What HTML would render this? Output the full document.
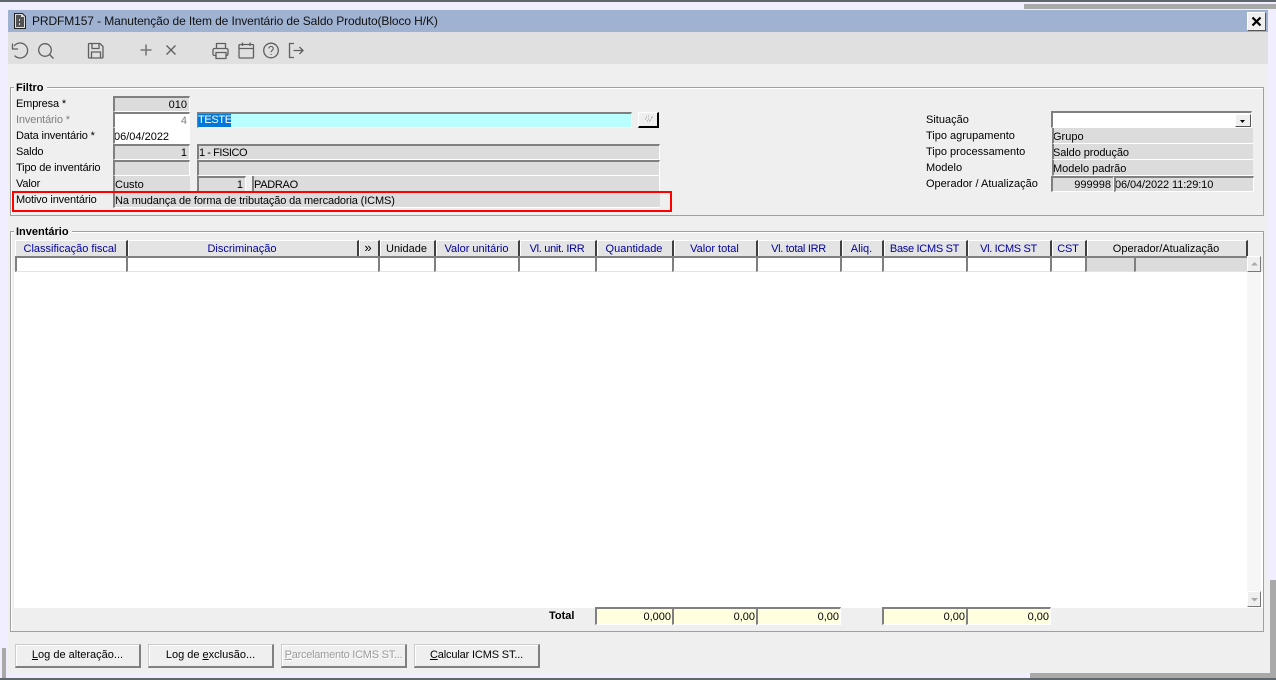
<!DOCTYPE html>
<html><head><meta charset="utf-8"><style>
html,body{margin:0;padding:0}
body{width:1276px;height:680px;position:relative;overflow:hidden;background:#f1efff;font:11px "Liberation Sans",sans-serif;color:#000}
div{position:absolute;box-sizing:border-box;white-space:nowrap}
.l{height:14px;line-height:14px;left:16px}
.s{letter-spacing:-.15px}
.f{border-top:2px solid #808080;border-left:2px solid #808080;border-right:1px solid #fff;border-bottom:1px solid #fff;background:#dcdcdc;line-height:14px;padding:0 2px 0 0;height:16px;overflow:hidden}
.w{background:#fff}
.y{background:#ffffe0;text-align:right;padding-right:1px}
.r{text-align:right}
.n{border-top:0;border-right:0;border-bottom:1px solid #fff;line-height:18px}
.h{top:240px;height:16px;background:#e4e4e4;border-right:2px solid #404040;border-left:1px solid #fff;border-top:1px solid #fff;text-align:center;line-height:17px;padding-right:2px;color:#00009c}
.c{top:256px;height:16px;background:#fff;border-top:2px solid #808080;border-left:2px solid #808080;border-bottom:1px solid #e4e4e4}
.g{border:1px solid #a0a0a0;box-shadow:inset 1px 1px 0 #fff}
.lg{background:#efefef;font-weight:bold;height:14px;line-height:14px;padding:0 3px 0 2px;left:14px}
.b{top:644px;height:24px;width:126px;background:#efefef;border:1px solid #ccc;border-right:2px solid #808080;border-bottom:2px solid #808080;box-shadow:inset 1px 1px 0 #fff;text-align:center;line-height:21px}
u{text-decoration:underline}
svg{position:absolute;overflow:visible}
</style></head><body>
<div style="left:0;top:0;width:1276px;height:2px;background:#5f666c"></div>
<div style="left:1024px;top:4px;width:252px;height:5px;background:#a9a9a9"></div>
<div style="left:1270px;top:580px;width:6px;height:100px;background:#a9a9a9"></div>
<div style="left:1030px;top:673px;width:246px;height:5px;background:#a9a9a9"></div>
<div style="left:0;top:678px;width:1276px;height:2px;background:#5f666c"></div>
<div style="left:2px;top:648px;width:4px;height:30px;background:#a9a9a9"></div>

<div style="left:8px;top:9px;width:1260px;height:664px;background:#efefef"></div>
<div style="left:1268px;top:580px;width:2px;height:93px;background:#efefef"></div>
<div style="left:8px;top:10px;width:1260px;height:22px;background:#a0b2d2"></div>
<div style="left:8px;top:32px;width:1260px;height:32px;background:#e0e0e0"></div>
<svg style="left:13px;top:13px" width="14" height="16" viewBox="0 0 14 16"><path d="M1.500 .5h8l3 3v12h-11z" fill="#ddd" stroke="#222"/><path d="M3 3h5M3 5h8M3 7h3M7 7h4M3 9h8M3 11h3M7 11h4M3 13h8" stroke="#000" stroke-width="1.200"/></svg>
<div style="left:32px;top:13px;height:16px;line-height:16px;font-size:12px;color:#111;letter-spacing:-.1px">PRDFM157 - Manutenção de Item de Inventário de Saldo Produto(Bloco H/K)</div>
<div style="left:1247px;top:12px;width:19px;height:19px;background:#efefef;border:1px solid #fff;border-right:1px solid #555;border-bottom:1px solid #555"></div>
<svg style="left:1252px;top:17px" width="9" height="9"><path d="M.5 .5l8 8M8.500 .5l-8 8" stroke="#000" stroke-width="2.200"/></svg>

<svg style="left:0;top:32px" width="320" height="32" fill="none" stroke="#5f5f5f" stroke-width="1.300">
<path d="M14.500 13.500A7.500 7.500 0 1 1 15 24" stroke-linecap="round"/><path d="M12.500 12v5h5" stroke-linecap="round"/>
<circle cx="45" cy="18" r="6.300"/><path d="M49.500 22.500l4 4"/>
<path d="M89.500 11.500h10.500l3 3v10.500a1 1 0 0 1-1 1h-12.500a1 1 0 0 1-1-1v-12.500a1 1 0 0 1 1-1zM92 12v4.500h7v-4.500M91.500 26v-6h9v6"/>
<path d="M146 12.500v11M140.500 18h11" stroke="#777" stroke-width="1.600"/>
<path d="M166.500 13.500l9 9M175.500 13.500l-9 9"/>
<path d="M216.500 17v-5.500h9V17M216 23.500h-1.500a1.500 1.500 0 0 1-1.500-1.500v-4a1.500 1.500 0 0 1 1.500-1.500h12a1.500 1.500 0 0 1 1.500 1.500v4a1.500 1.500 0 0 1-1.500 1.500H226M216 20.500h10v6h-10z"/>
<path d="M240 12.500h12.500a1 1 0 0 1 1 1v11.500a1 1 0 0 1-1 1H240a1 1 0 0 1-1-1V13.500a1 1 0 0 1 1-1zM239 16.500h14.500M242.500 10.500v3.500M250 10.500v3.500"/>
<circle cx="271" cy="18.500" r="7.300"/><path d="M268.800 16.500a2.200 2.200 0 1 1 3.300 2c-.8.500-1.100.9-1.100 1.800M271 22v1" stroke-width="1.100"/>
<path d="M294 11.500h-4.500v14h4.500M293.500 18.500h9.500M299.500 15l3.500 3.500-3.500 3.500"/>
</svg>

<div class="g" style="left:10px;top:87px;width:1254px;height:129px"></div>
<div class="lg" style="top:81px">Filtro</div>
<div class="l s" style="top:97px">Empresa *</div>
<div class="l s" style="top:113px;color:#808080">Inventário *</div>
<div class="l s" style="top:129px">Data inventário *</div>
<div class="l s" style="top:145px">Saldo</div>
<div class="l s" style="top:161px">Tipo de inventário</div>
<div class="l s" style="top:177px">Valor</div>
<div class="l s" style="top:193px">Motivo inventário</div>

<div class="f r" style="left:113px;top:96px;width:77px">010</div>
<div class="f w r" style="left:113px;top:112px;width:77px;color:#808080">4</div>
<div class="f w" style="left:113px;top:128px;width:77px;border-top:0;line-height:18px;text-indent:-1px">06/04/2022</div>
<div class="f r" style="left:113px;top:144px;width:77px">1</div>
<div class="f" style="left:113px;top:160px;width:77px"></div>
<div class="f n" style="left:113px;top:176px;width:77px">Custo</div>
<div class="f" style="left:197px;top:112px;width:435px;background:#b9ffff"></div>
<div style="left:198px;top:114px;width:33px;height:13px;background:#0078d7;color:#fff;line-height:13px;padding-left:0;letter-spacing:-.35px;overflow:hidden">TESTE</div>
<div style="left:638px;top:112px;width:21px;height:16px;background:#efefef;border:1px solid #fff;border-right:2px solid #000;border-bottom:2px solid #000"></div>
<svg style="left:644px;top:115px" width="10" height="9"><path d="M2 2h1M4 1h1M1 4h1M4 4h1M5 6h1M7 3h1M3 6h1M6 5h1M8 2h1" stroke="#999"/></svg>
<div class="f" style="left:197px;top:144px;width:463px;letter-spacing:-.45px">1 - FISICO</div>
<div class="f" style="left:197px;top:160px;width:463px"></div>
<div class="f r" style="left:197px;top:176px;width:49px">1</div>
<div class="f" style="left:252px;top:176px;width:408px;border-top:0;line-height:18px;letter-spacing:-.3px">PADRAO</div>
<div class="f n" style="left:113px;top:192px;width:547px;letter-spacing:-.13px">Na mudança de forma de tributação da mercadoria (ICMS)</div>
<div style="left:12px;top:191px;width:660px;height:21px;border:2px solid #f00"></div>

<div class="l" style="left:926px;top:113px">Situação</div>
<div class="l" style="left:926px;top:129px">Tipo agrupamento</div>
<div class="l" style="left:926px;top:145px">Tipo processamento</div>
<div class="l" style="left:926px;top:161px">Modelo</div>
<div class="l" style="left:926px;top:177px">Operador / Atualização</div>
<div class="f w" style="left:1051px;top:111px;width:201px;height:17px"></div>
<div style="left:1235px;top:114px;width:16px;height:13px;background:#efefef;border:1px solid #fff;border-right:1px solid #555;border-bottom:1px solid #555"></div>
<svg style="left:1240px;top:120px" width="6" height="4"><path d="M0 0h5L2.500 3z" fill="#000"/></svg>
<div class="f n" style="left:1052px;top:128px;width:201px;height:16px;text-indent:-1px">Grupo</div>
<div class="f n" style="left:1052px;top:144px;width:201px;height:16px;text-indent:-1px;letter-spacing:-.08px">Saldo produção</div>
<div class="f n" style="left:1052px;top:160px;width:201px;height:16px;text-indent:-1px">Modelo padrão</div>
<div class="f r" style="left:1051px;top:176px;width:63px">999998</div>
<div class="f" style="left:1114px;top:176px;width:140px;text-indent:-1px;letter-spacing:-.1px">06/04/2022 11:29:10</div>

<div class="g" style="left:10px;top:231px;width:1254px;height:401px"></div>
<div class="lg" style="top:225px">Inventário</div>
<div style="left:14px;top:272px;width:1249px;height:336px;background:#fff"></div>

<div class="h" style="left:15px;width:113px">Classificação fiscal</div>
<div class="h" style="left:128px;width:231px">Discriminação</div>
<div class="h" style="left:359px;width:21px;color:#000;font-size:13px;line-height:14px">»</div>
<div class="h" style="left:380px;width:56px;color:#000">Unidade</div>
<div class="h" style="left:436px;width:84px">Valor unitário</div>
<div class="h" style="left:520px;width:77px;letter-spacing:-.3px">Vl. unit. IRR</div>
<div class="h" style="left:597px;width:77px">Quantidade</div>
<div class="h" style="left:674px;width:84px">Valor total</div>
<div class="h" style="left:758px;width:84px;letter-spacing:-.3px">Vl. total IRR</div>
<div class="h" style="left:842px;width:42px">Aliq.</div>
<div class="h" style="left:884px;width:84px;letter-spacing:-.3px">Base ICMS ST</div>
<div class="h" style="left:968px;width:84px;letter-spacing:-.35px">Vl. ICMS ST</div>
<div class="h" style="left:1052px;width:35px;letter-spacing:-.2px">CST</div>
<div class="h" style="left:1087px;width:161px;color:#000">Operador/Atualização</div>

<div class="c" style="left:15px;width:111px"></div>
<div class="c" style="left:126px;width:252px"></div>
<div class="c" style="left:378px;width:56px"></div>
<div class="c" style="left:434px;width:84px"></div>
<div class="c" style="left:518px;width:77px"></div>
<div class="c" style="left:595px;width:77px"></div>
<div class="c" style="left:672px;width:84px"></div>
<div class="c" style="left:756px;width:84px"></div>
<div class="c" style="left:840px;width:42px"></div>
<div class="c" style="left:882px;width:84px"></div>
<div class="c" style="left:966px;width:84px"></div>
<div class="c" style="left:1050px;width:35px"></div>
<div class="c" style="left:1085px;width:49px;background:#dcdcdc"></div>
<div class="c" style="left:1134px;width:113px;background:#dcdcdc"></div>

<div style="left:1247px;top:272px;width:14px;height:320px;background:#f6f6f6"></div>
<div style="left:1247px;top:256px;width:14px;height:16px;background:#efefef;border:1px solid #fff;border-right:1px solid #777;border-bottom:1px solid #777"></div>
<svg style="left:1251px;top:262px" width="7" height="4"><path d="M0 3.500h7L3.500 0z" fill="#aaa"/></svg>
<div style="left:1247px;top:591px;width:14px;height:16px;background:#efefef;border:1px solid #fff;border-right:1px solid #777;border-bottom:1px solid #777"></div>
<svg style="left:1251px;top:598px" width="7" height="4"><path d="M0 0h7L3.500 3.500z" fill="#aaa"/></svg>

<div style="left:549px;top:609px;height:14px;line-height:14px;font-weight:bold">Total</div>
<div class="f y" style="left:595px;top:607px;width:78px;height:18px;line-height:16px">0,000</div>
<div class="f y" style="left:672px;top:607px;width:85px;height:18px;line-height:16px">0,00</div>
<div class="f y" style="left:756px;top:607px;width:85px;height:18px;line-height:16px">0,00</div>
<div class="f y" style="left:882px;top:607px;width:85px;height:18px;line-height:16px">0,00</div>
<div class="f y" style="left:966px;top:607px;width:85px;height:18px;line-height:16px">0,00</div>

<div class="b" style="left:15px"><u>L</u>og de alteração...</div>
<div class="b" style="left:148px">Log de <u>e</u>xclusão...</div>
<div class="b" style="left:281px;color:#9a9a9a;letter-spacing:-.25px;text-shadow:1px 1px 0 #fff"><u>P</u>arcelamento ICMS ST...</div>
<div class="b" style="left:414px;letter-spacing:-.15px"><u>C</u>alcular ICMS ST...</div>
</body></html>
